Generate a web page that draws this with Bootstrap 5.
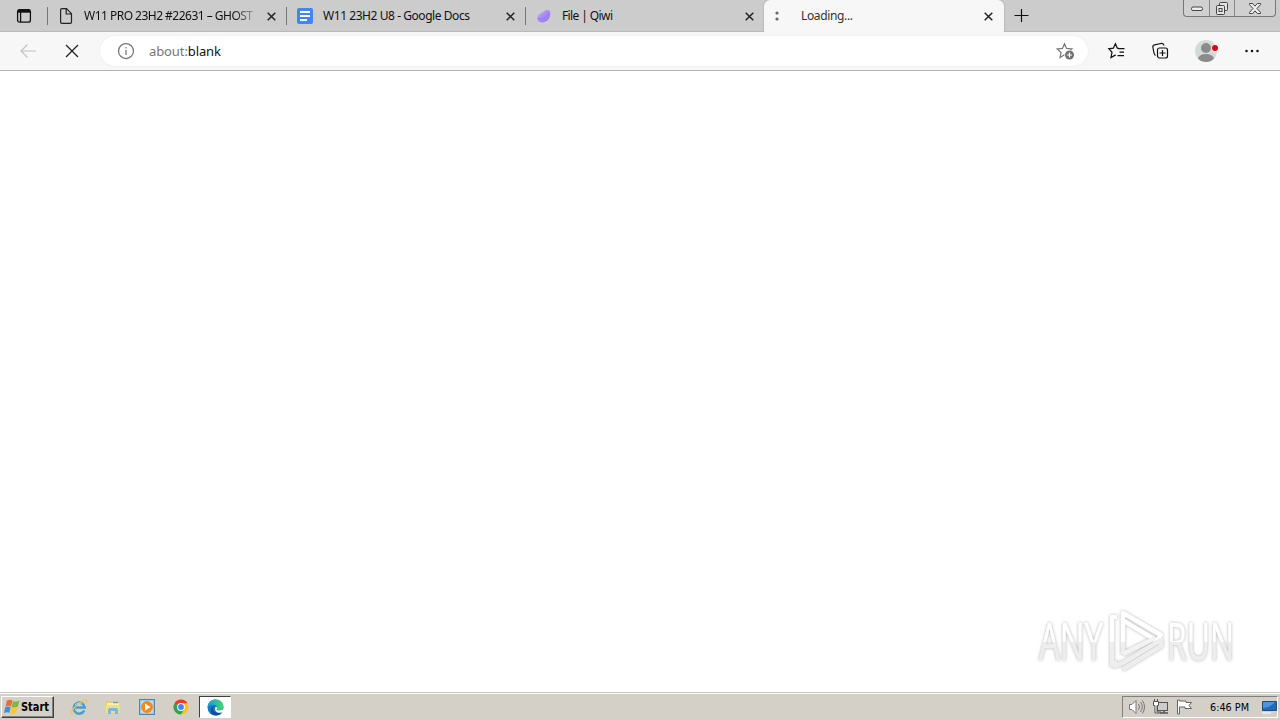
<!DOCTYPE html>
<html lang="en">
<head>
  <meta charset="UTF-8" />
  <title>Loading...</title>
  <meta name="viewport" content="width=device-width, initial-scale=1" />
  <link href="https://cdn.jsdelivr.net/npm/bootstrap@5.3.3/dist/css/bootstrap.min.css" rel="stylesheet" />
  <style>
    body { font:12px/16px "Noto Sans", "Open Sans", sans-serif; color:#111; background:#fff; }
    svg { display:block; flex:none; overflow:visible; }

    .tabstrip { height:32px; background:#ccc; border-bottom:1px solid #b9b9b9; }
    .strip-menu { width:48px; padding-left:16px; }
    .tab { width:239px; height:32px; padding:0 7px 0 9px; position:relative; }
    .tab:not(.tab-active)::before { content:""; position:absolute; left:-1px; top:7px; width:1px; height:18px; background:#777; }
    .tab-active { width:240px; margin-left:-1px; background:#f7f7f7; border-radius:6px 6px 0 0; box-shadow:0 0 2px #999; clip-path:inset(-2px -2px 0 -2px); color:#333; }
    .tab-text { margin-left:8px; white-space:nowrap; overflow:hidden; }
    .fade-end { -webkit-mask-image:linear-gradient(90deg,#000 88%,rgba(0,0,0,.25)); mask-image:linear-gradient(90deg,#000 88%,rgba(0,0,0,.25)); }
    .win-buttons { width:93px; height:17px; margin-right:4px; border:1px solid #777; border-top:0; border-radius:0 0 4px 4px; background:#d0d0d0; }
    .win-buttons > div { height:16px; display:flex; align-items:center; justify-content:center; }
    .win-buttons > div + div { border-left:1px solid #888; }

    .toolbar { height:39px; background:#f7f7f7; border-bottom:1px solid #b4b4b4; }
    .address { width:988px; height:30px; margin-left:21px; padding:0 14px 0 17px; background:#fff; border-radius:15px; box-shadow:0 0 2px #e4e4e4; font-size:13px; }
    .address .scheme { color:#6c6c6c; }

    .page { position:relative; }
    .watermark { position:absolute; left:1030px; top:529px; filter:drop-shadow(0 0 1.5px rgba(0,0,0,.3)); }

    .taskbar { height:28px; background:#d4d0c8; border-top:1px solid #c9c6bf; box-shadow:inset 0 1px #fff; font:11px/14px "DejaVu Sans Condensed", "DejaVu Sans", sans-serif; color:#000; padding-top:1px; }
    .start { width:53px; height:22px; margin-left:1px; padding-left:2px; border:1px solid; border-color:#fff #404040 #404040 #fff; box-shadow:inset -1px -1px #808080; font-weight:700; }
    .launch { margin-left:16px; gap:16px; }
    .task-active { width:32px; height:22px; margin-left:9px; background:#fff; border:1px solid; border-color:#404040 #fff #fff #404040; }
    .tray { width:156px; height:22px; margin-right:2px; padding-left:5px; border:1px solid; border-color:#808080 #fff #fff #808080; }
  </style>
</head>
<body class="vh-100 d-flex flex-column overflow-hidden">

  <svg width="0" height="0" class="position-absolute">
    <symbol id="cross" viewBox="0 0 9 9"><path d="M.7.7 8.3 8.3M8.3.7.7 8.3" fill="none" stroke="#222" stroke-width="1.5"/></symbol>
  </svg>

  <header class="tabstrip d-flex">
    <div class="strip-menu d-flex align-items-center">
      <svg width="16" height="16" viewBox="0 0 16 16" fill="none" stroke="#111" stroke-width="1.3"><rect x="1.6" y="1.6" width="12.8" height="12.6" rx="2"/><path d="M2 3.2h12" stroke-width="3"/><path d="M4.6 4v10"/></svg>
    </div>

    <div class="tab d-flex align-items-center">
      <svg width="18" height="16" viewBox="0 0 18 16" fill="none" stroke="#222" stroke-width="1.2"><path d="M4.3.7h5.2l5 5v8.2q0 1.4-1.4 1.4H5q-1.4 0-1.4-1.4V2Q3.6.7 4.9.7M9.2.9V6h5"/></svg>
      <svg class="tab-text fade-end" width="171" height="18"><text x="1" y="13" textLength="169" fill="#111">W11 PRO 23H2 #22631 – GHOST</text></svg>
      <svg class="ms-auto me-1" width="9" height="9"><use href="#cross"/></svg>
    </div>

    <div class="tab d-flex align-items-center">
      <svg width="18" height="16" viewBox="0 0 18 16"><rect x="1" width="16" height="16" rx="2" fill="#4285f4"/><path d="M4 4h10M4 8h10M4 12h7" stroke="#fff" stroke-width="2"/></svg>
      <svg class="tab-text" width="150" height="18"><text x="1" y="13" textLength="147" fill="#111">W11 23H2 U8 - Google Docs</text></svg>
      <svg class="ms-auto me-1" width="9" height="9"><use href="#cross"/></svg>
    </div>

    <div class="tab d-flex align-items-center">
      <svg width="18" height="16" viewBox="0 0 18 16">
        <defs><linearGradient id="bean" x1="0" y1="0" x2="1" y2="1"><stop stop-color="#c4a7ff"/><stop offset="1" stop-color="#8f70e8"/></linearGradient></defs>
        <path d="M2.3 11C1.7 7 6 5.8 8.5 3.5 11.5 1 15 1.3 15.3 5c.4 5-3.3 9.3-8 9.4C4.800 14.500 2.600 13.500 2.300 11Z" fill="url(#bean)"/><path d="M3 10.500c4 1 8-1 11-5" stroke="#9a78f0" fill="none"/>
      </svg>
      <svg class="tab-text" width="60" height="18"><text x="1" y="13" textLength="51" fill="#111">File | Qiwi</text></svg>
      <svg class="ms-auto me-1" width="9" height="9"><use href="#cross"/></svg>
    </div>

    <div class="tab tab-active d-flex align-items-center">
      <svg width="18" height="16" viewBox="0 0 18 16" fill="#666"><circle cx="4" cy="5" r="1.6"/><circle cx="4" cy="11" r="1.6"/></svg>
      <svg class="tab-text" width="60" height="18"><text x="2" y="13" textLength="52" fill="#333">Loading...</text></svg>
      <svg class="ms-auto me-1" width="9" height="9"><use href="#cross"/></svg>
    </div>

    <svg class="mt-2 ms-2" width="18" height="16" viewBox="0 0 18 16"><path d="M2.500 7.500h14M9.500 1v13" stroke="#111" stroke-width="1.2"/></svg>

    <div class="win-buttons d-flex ms-auto">
      <div style="width:25px"><svg width="12" height="5"><rect x=".5" y="1" width="11" height="3.5" rx="1.5" fill="#eee" stroke="#444"/></svg></div>
      <div style="width:25px"><svg width="13" height="13" fill="#e4e4e4" stroke="#444"><rect x="3.5" y=".5" width="8" height="8" rx="1"/><rect x=".5" y="3.5" width="8" height="9" rx="1"/><rect x="3" y="6.500" width="3" height="3"/></svg></div>
      <div style="width:41px"><svg width="12" height="11" viewBox="0 0 12 11"><path d="M.5.5h3.200L6 3.200 8.300.5h3.200v1.200L7.900 5.500l3.600 3.800v1.200H8.300L6 7.800l-2.300 2.700H.5V9.300l3.600-3.800L.5 1.700Z" fill="#eee" stroke="#444"/></svg></div>
    </div>
  </header>

  <nav class="toolbar d-flex align-items-center">
    <svg class="ms-3 ps-1" width="28" height="16" viewBox="0 0 24 16" fill="none" stroke="#c2c2c2" stroke-width="1.2"><path d="M16 8H1M7.500 1.500 1 8l6.500 6.500"/></svg>
    <svg style="margin-left:21px" width="14" height="14"><path d="m1 1 12 12M13 1 1 13" stroke="#222" stroke-width="1.25"/></svg>

    <div class="address d-flex align-items-center">
      <svg width="18" height="18" fill="none" stroke="#777" stroke-width="1.25"><circle cx="9" cy="9" r="7.5"/><path d="M9 8v5M9 5v1.500"/></svg>
      <svg style="margin-left:14px" width="75" height="20"><text y="14.5" font-size="13" textLength="72" class="scheme" fill="#777">about:<tspan fill="#111">blank</tspan></text></svg>
      <svg class="ms-auto" width="18" height="18" viewBox="0 0 18 18"><path d="m8.500 1.700 2.100 4.700 5.300.6-4 3.500 1.200 5-4.600-2.700L4 15.500l1.100-5L1.200 7l5.200-.6Z" fill="none" stroke="#777" stroke-width="1.2"/><circle cx="13.5" cy="13" r="5.2" fill="#fff"/><circle cx="13.5" cy="13" r="4.5" fill="#707070"/><path d="M11 13h5M13.500 10.500v5" stroke="#fff" stroke-width="1.2"/></svg>
    </div>

    <svg style="margin-left:20px" width="17" height="18" viewBox="0 0 17 18" fill="none" stroke="#111" stroke-width="1.25"><path d="M10.500 6.200H9.300L7.400 1.700 5.300 6.200.9 6.800 4 10.300 3 15.500l4.700-2.600M10 6.500h6.500M11.500 10H16M9.500 13.500h6.500"/></svg>
    <svg style="margin-left:27px" width="17" height="18" viewBox="0 0 17 18" fill="none" stroke="#111" stroke-width="1.2"><path d="M3.500 13.500c-1-.5-1.300-1.300-1.500-2.500L.9 5.500C.6 4 1.200 3.200 2.500 2.800L9 1.500c1.500-.3 2.600.4 2.900 2"/><rect x="5.500" y="6" width="10" height="10" rx="2"/><path d="M10.500 8v6M7.500 11h6"/></svg>
    <svg style="margin-left:26px" width="24" height="24"><defs><clipPath id="face"><circle cx="11" cy="12" r="11"/></clipPath></defs><g clip-path="url(#face)"><rect width="24" height="24" fill="#d1dbd7"/><circle cx="11" cy="9" r="5" fill="#8b8b8b"/><ellipse cx="11" cy="20" rx="8" ry="5" fill="#8b8b8b"/></g><circle cx="20" cy="9" r="3.5" fill="#f7f7f7"/><circle cx="20" cy="9" r="3" fill="#e0000b"/></svg>
    <svg style="margin-left:26px" width="14" height="4" fill="#111"><circle cx="1.5" cy="2" r="1.25"/><circle cx="7" cy="2" r="1.25"/><circle cx="12.5" cy="2" r="1.25"/></svg>
  </nav>

  <main class="page flex-grow-1">
    <svg class="watermark" width="220" height="80" font-family="Open Sans, sans-serif" font-size="51">
      <defs><linearGradient id="halves" gradientUnits="userSpaceOnUse" x1="0" y1="0" x2="0" y2="80"><stop offset=".52" stop-color="#fff"/><stop offset=".52" stop-color="#eee"/></linearGradient></defs>
      <g fill="url(#halves)" stroke="url(#halves)" stroke-width=".7">
        <text x="9" y="60" textLength="64" lengthAdjust="spacingAndGlyphs">ANY</text>
        <text x="137" y="60" textLength="67" lengthAdjust="spacingAndGlyphs">RUN</text>
      </g>
      <g fill="none" stroke-width="4.5" stroke-linejoin="round">
        <path d="M87 17h-5v48l5-3" stroke="url(#halves)"/>
        <path d="M93 54V13l38 22-4 6-33-20" stroke="url(#halves)"/>
        <path d="m93 69 38-23v-6L93 63 83 66" stroke="#eee"/>
        <path d="m93 54 32-16" stroke="#f3f3f3"/>
      </g>
    </svg>
  </main>

  <footer class="taskbar d-flex align-items-center">
    <div class="start d-flex align-items-center">
      <svg width="16" height="16" viewBox="0 0 16 16"><path d="M3 1.500q3-1.500 5.500 0L7 7.500q-2.500-1.300-5.500 0Z" fill="#ed6b34"/><path d="M9 2q2.500 1.400 6.500-.5L14 7.500q-3.300 1.700-6.500.4Z" fill="#82b841"/><path d="M1.200 8.200q2.900-1.400 5.500 0l-1.500 5.800q-2-1.500-5.200 0Z" fill="#3b91dc"/><path d="M7.200 8.500q2.800 1.400 6.500-.3l-1.600 5.800q-3.400 1.600-6.400.2Z" fill="#ffc63b"/></svg>
      <svg width="31" height="16"><text x="1" y="12" textLength="28" lengthAdjust="spacingAndGlyphs" font-size="11.5" font-family="DejaVu Sans">Start</text></svg>
    </div>

    <div class="launch d-flex align-items-center">
      <svg width="18" height="18" viewBox="0 0 18 18" fill="none"><path d="M14.200 12.500A5.500 5.500 0 1 1 14.700 9.500H5" stroke="#409fd8" stroke-width="2.5"/><path d="M5 7a5 5 0 0 1 7-1" stroke="#a5e2fa"/><path d="M3 16C-2 16 6 6 13 2.500c4-2 4.500 0 3 2.500" stroke="#e9c657" stroke-width="1.3"/></svg>
      <svg width="18" height="18" viewBox="0 0 18 18"><path d="M2 3h5l1 1h8v9H2Z" fill="#e8ca70"/><path d="M3 5h12v7H3Z" fill="#fff2a8"/><path d="M9 4.500h5" stroke="#63a8a0" stroke-width="1.5"/><path d="M2 7h14v8H2Z" fill="#f3dc87"/><path d="M4 16v-4q0-2 2-2h6q2 0 2 2v4h-3v-3H7v3Z" fill="#78bad6"/></svg>
      <svg width="18" height="18" viewBox="0 0 18 18"><rect x="1.500" y="1.500" width="15" height="15" fill="#9bc8ec" stroke="#4688bd"/><rect x="3.500" y="3.500" width="11" height="11" fill="#d9efff"/><circle cx="9" cy="9" r="6" fill="#f28a18"/><path d="m7 5.500 5.500 3.500L7 12.500Z" fill="#fff"/></svg>
      <svg width="18" height="18" viewBox="0 0 18 18"><circle cx="9" cy="9" r="7.5" fill="#fbc318"/><path d="M9 9 2.500 5.250A7.500 7.500 0 0 1 15.500 5.250H9Z" fill="#e63d31"/><path d="M9 9 2.500 5.250A7.500 7.500 0 0 0 9 16.500L12.250 11Z" fill="#2da44f"/><circle cx="9" cy="9" r="3.9" fill="#fff"/><circle cx="9" cy="9" r="2.9" fill="#4285f4"/></svg>
    </div>

    <div class="task-active d-flex align-items-center justify-content-center">
      <svg width="17" height="17" viewBox="0 0 17 17"><defs><linearGradient id="wave"><stop stop-color="#159ee5"/><stop offset="1" stop-color="#4bd366"/></linearGradient></defs><circle cx="8.5" cy="8.5" r="8" fill="#1679c8"/><path d="M.5 8C1 3 4.500.5 8.500.5c5 0 8 3.500 8 7 0 3-2 4-4.500 4-2 0-3-.8-2.500-1.500C12 7 6 3.500.5 8Z" fill="url(#wave)"/><path d="M7 7c-3 4 1 8 7 6.500l1.500-.8c-2 4-7 4.800-10 2.800C2.500 13 3.500 8.500 7 7Z" fill="#104f9d"/><path d="M8.500 8c1.700-.2 2.200 1 1.200 2-.7 1.200 1.800 2 5.300 1.100l2-.7-1.300 2.900c-4.200 1.500-9-.5-7.200-5.300Z" fill="#fff"/></svg>
    </div>

    <div class="tray d-flex align-items-center ms-auto">
      <svg width="18" height="18" viewBox="0 0 18 18" fill="none" stroke="#777"><path d="M1.500 6.500H4l4-4v13l-4-4H1.500Z" fill="#fff"/><path d="M10.500 6q2 3 0 6M12.500 4q3.500 5 0 10M14.500 2.500q4 6.500 0 13"/></svg>
      <svg style="margin-left:6px" width="18" height="18" viewBox="0 0 18 18" fill="none" stroke="#555"><rect x="5.5" y="4.5" width="10" height="8" fill="#ccc"/><path d="M8 15h8M12 13v2" stroke-width="1.5"/><path d="M1.500 3.500h5v4h-1.500v6.500h4v1H3V7.500H1.500ZM2.500 1v2M5.500 1v2" fill="#fff"/></svg>
      <svg style="margin-left:6px" width="18" height="18" viewBox="0 0 18 18" fill="#fff" stroke="#666"><path d="M1.500 2v14h2V9H9v1.500h6.500L13 7.500l2.500-3H10V3H3.500V2Z"/></svg>
      <svg style="margin-left:16px" width="43" height="16"><text x="0" y="12" textLength="39" lengthAdjust="spacingAndGlyphs" font-family="DejaVu Sans Condensed" font-size="11">6:46 PM</text></svg>
      <svg class="ms-2" width="16" height="16" viewBox="0 0 16 16"><path d="M1.500 2.500h14v9h-14Z" fill="#246bb5" stroke="#1f4c87"/><path d="M2 9q7 0 12-6H2Z" fill="#4b95db"/><path d="M1 14h9" stroke="#eee" stroke-width="1.5"/></svg>
    </div>
  </footer>

  <script src="https://cdn.jsdelivr.net/npm/bootstrap@5.3.3/dist/js/bootstrap.bundle.min.js"></script>
</body>
</html>
